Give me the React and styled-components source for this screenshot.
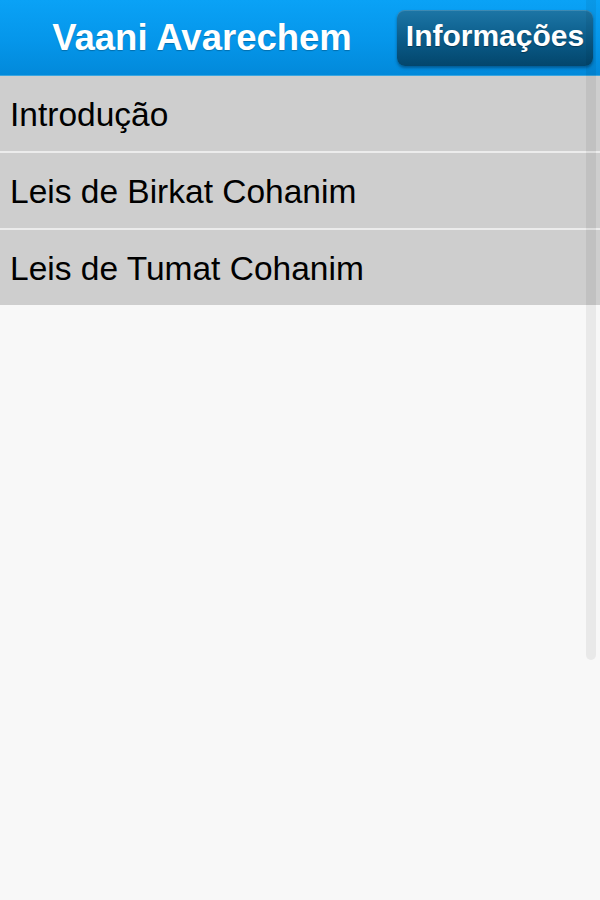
import React from 'react';
import styled, { createGlobalStyle } from 'styled-components';

const GlobalStyle = createGlobalStyle`
  html, body {
    margin: 0;
    padding: 0;
    background: #f8f8f8;
    font-family: "Liberation Sans", Arial, sans-serif;
  }
`;

const Page = styled.div`
  position: relative;
  width: 600px;
  height: 900px;
  overflow: hidden;
  background: #f8f8f8;
`;

const Header = styled.header`
  height: 75px;
  display: flex;
  align-items: center;
  background: linear-gradient(180deg, #0aa2f6 0%, #0596ea 55%, #0289da 100%);
  border-bottom: 1px solid #3aa6e0;
`;

const Title = styled.h1`
  flex: 1;
  margin: 0;
  padding-left: 7px;
  text-align: center;
  color: #fff;
  font-size: 36.5px;
  font-weight: 700;
  text-shadow: 0 1px 1px rgba(0, 0, 0, 0.25);
`;

const InfoButton = styled.button`
  margin-right: 7px;
  height: 56px;
  width: 196px;
  padding: 0 0 4px;
  border: none;
  border-radius: 8px;
  background: linear-gradient(180deg, #1d76a6 0%, #0b5d8b 50%, #03466c 100%);
  box-shadow: 0 2px 3px rgba(0, 30, 60, 0.45), inset 0 1px 0 rgba(255, 255, 255, 0.15);
  color: #fff;
  font-family: inherit;
  font-size: 30px;
  font-weight: 700;
  text-shadow: 0 1px 1px rgba(0, 0, 0, 0.35);
  cursor: pointer;
`;

const List = styled.ul`
  list-style: none;
  margin: 0;
  padding: 0;
`;

const Item = styled.li`
  height: 75px;
  box-sizing: border-box;
  display: flex;
  align-items: center;
  padding: 3px 0 0 10px;
  background: #cecece;
  color: #000;
  font-size: 33.5px;
  & + & {
    height: 77px;
    border-top: 2px solid #ececec;
  }
`;

const ScrollTrack = styled.div`
  position: absolute;
  top: 0;
  right: 4px;
  width: 10px;
  height: 660px;
  border-radius: 0 0 5px 5px;
  background: rgba(0, 0, 0, 0.06);
`;

const sections = ['Introdução', 'Leis de Birkat Cohanim', 'Leis de Tumat Cohanim'];

export default function App() {
  return (
    <Page>
      <GlobalStyle />
      <Header>
        <Title>Vaani Avarechem</Title>
        <InfoButton>Informações</InfoButton>
      </Header>
      <List>
        {sections.map(s => (
          <Item key={s}>{s}</Item>
        ))}
      </List>
      <ScrollTrack />
    </Page>
  );
}
